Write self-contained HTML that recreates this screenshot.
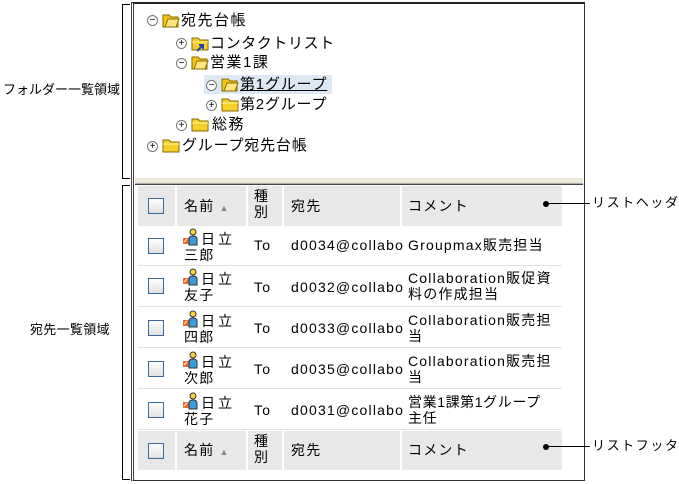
<!DOCTYPE html><html><head><meta charset="utf-8"><style>
*{margin:0;padding:0;box-sizing:border-box}
body{width:679px;height:484px;background:#fff;position:relative;overflow:hidden;font-family:"Liberation Sans","Noto Sans CJK JP",sans-serif;font-size:14px;color:#000}
.a{position:absolute;white-space:nowrap}
.t{font-size:14px;line-height:16px;letter-spacing:1.2px}
.tr{font-size:15px;line-height:16px;letter-spacing:1.5px}
.fold{position:absolute;width:18px;height:15px}
.pm{position:absolute;width:11px;height:11px;border:1px solid #777;border-radius:50%;background:#fff;font-size:10px;line-height:9px;text-align:center;color:#000}
.cb{position:absolute;width:16px;height:16px;border:1.5px solid #3c6a9c;background:linear-gradient(#fff,#e0e0e0)}
.hd{position:absolute;background:#e8e8e8}
.sep{position:absolute;left:138px;width:424px;height:1px;background:#e2e2e2}
</style></head><body>
<div class="a" style="left:122px;top:4px;width:8px;height:175px;border:1px solid #000;border-right:none"></div>
<div class="a" style="left:122px;top:185px;width:8px;height:295px;border:1px solid #000;border-right:none"></div>
<div class="a t" style="left:3px;top:82px;font-size:13px;letter-spacing:0px">フォルダー一覧領域</div>
<div class="a t" style="left:30px;top:322px;font-size:13px;letter-spacing:0.3px">宛先一覧領域</div>
<div class="a" style="left:131px;top:2px;width:454px;height:479px;border:1px solid #333;border-left:3px double #444;border-top:2px solid #222"></div>
<div class="a" style="left:135px;top:177px;width:448px;height:7px;background:#ece9d8;border-top:1px solid #fff;border-bottom:1px solid #aaa"></div>
<div class="a" style="left:135px;top:184px;width:448px;height:1px;background:#444"></div>
<svg width="0" height="0" style="position:absolute"><defs>
<symbol id="fo" viewBox="0 0 18 15"><path d="M1 2h6l2 2h7v10H1z" fill="#f5c518" stroke="#8a6a00"/><path d="M3 14l3-8h11l-3 8z" fill="#ffe680" stroke="#8a6a00"/></symbol>
<symbol id="fc" viewBox="0 0 18 15"><path d="M1 2h6l2 2h8v10H1z" fill="#f7cf2b" stroke="#8a6a00"/><path d="M1 6h16" stroke="#fff3a0"/></symbol>
<symbol id="pe" viewBox="0 0 16 18"><rect x="0" y="10" width="6" height="6" fill="#f06a2a"/><path d="M1 14l3-3" stroke="#fff"/><circle cx="10" cy="4" r="3" fill="#ffd23a" stroke="#333"/><path d="M6 17v-6q0-3 4-3t4 3v6z" fill="#3a9be0" stroke="#333"/></symbol>
</defs></svg>
<div class="pm" style="left:147px;top:15px">−</div><svg class="fold" style="left:162px;top:13px"><use href="#fo"/></svg><div class="a tr" style="left:181px;top:13px">宛先台帳</div>
<div class="pm" style="left:176px;top:38px">+</div><svg class="fold" style="left:191px;top:36px"><use href="#fc"/></svg><svg class="a" width="10" height="10" style="left:196px;top:42px"><path d="M1 9l6-6M3 3h4v4" stroke="#1d48b0" stroke-width="2" fill="none"/></svg><div class="a tr" style="left:210px;top:36px;letter-spacing:0.6px">コンタクトリスト</div>
<div class="pm" style="left:176px;top:58px">−</div><svg class="fold" style="left:191px;top:55px"><use href="#fo"/></svg><div class="a tr" style="left:210px;top:55px">営業1課</div>
<div class="a" style="left:204px;top:75px;width:128px;height:19px;background:#dde8f4"></div>
<div class="pm" style="left:206px;top:80px">−</div><svg class="fold" style="left:221px;top:77px"><use href="#fo"/></svg><div class="a tr" style="left:240px;top:77px;text-decoration:underline;letter-spacing:0.8px">第1グループ</div>
<div class="pm" style="left:206px;top:100px">+</div><svg class="fold" style="left:221px;top:97px"><use href="#fc"/></svg><div class="a tr" style="left:240px;top:97px;letter-spacing:0.8px">第2グループ</div>
<div class="pm" style="left:176px;top:120px">+</div><svg class="fold" style="left:191px;top:117px"><use href="#fc"/></svg><div class="a tr" style="left:212px;top:117px">総務</div>
<div class="pm" style="left:147px;top:141px">+</div><svg class="fold" style="left:162px;top:138px"><use href="#fc"/></svg><div class="a tr" style="left:182px;top:138px;letter-spacing:0.8px">グループ宛先台帳</div>
<div class="hd" style="left:138px;top:186px;width:37px;height:40px"></div>
<div class="hd" style="left:177px;top:186px;width:69px;height:40px"></div>
<div class="hd" style="left:248px;top:186px;width:34px;height:40px"></div>
<div class="hd" style="left:284px;top:186px;width:116px;height:40px"></div>
<div class="hd" style="left:402px;top:186px;width:160px;height:40px"></div>
<div class="cb" style="left:148px;top:198px"></div>
<div class="a t" style="left:184px;top:198px">名前 <span style="color:#888;font-size:9px">▲</span></div>
<div class="a t" style="left:254px;top:188px">種<br>別</div>
<div class="a t" style="left:291px;top:198px">宛先</div>
<div class="a t" style="left:408px;top:198px">コメント</div>
<div class="sep" style="top:265px"></div><div class="sep" style="top:306px"></div><div class="sep" style="top:347px"></div><div class="sep" style="top:388px"></div><div class="sep" style="top:429px"></div>
<div class="cb" style="left:148px;top:238px"></div><svg class="a" width="16" height="18" style="left:183px;top:228px"><use href="#pe"/></svg><div class="a t" style="left:201px;top:231px;letter-spacing:3px">日立</div><div class="a t" style="left:184px;top:247px">三郎</div><div class="a t" style="left:254px;top:237px">To</div><div class="a t" style="left:291px;top:237px">d0034@collabo</div><div class="a t" style="left:408px;top:237px">Groupmax販売担当</div>
<div class="cb" style="left:148px;top:278px"></div><svg class="a" width="16" height="18" style="left:183px;top:268px"><use href="#pe"/></svg><div class="a t" style="left:201px;top:271px;letter-spacing:3px">日立</div><div class="a t" style="left:184px;top:287px">友子</div><div class="a t" style="left:254px;top:279px">To</div><div class="a t" style="left:291px;top:279px">d0032@collabo</div><div class="a t" style="left:408px;top:270px">Collaboration販促資<br>料の作成担当</div>
<div class="cb" style="left:148px;top:320px"></div><svg class="a" width="16" height="18" style="left:183px;top:310px"><use href="#pe"/></svg><div class="a t" style="left:201px;top:313px;letter-spacing:3px">日立</div><div class="a t" style="left:184px;top:329px">四郎</div><div class="a t" style="left:254px;top:320px">To</div><div class="a t" style="left:291px;top:320px">d0033@collabo</div><div class="a t" style="left:408px;top:312px">Collaboration販売担<br>当</div>
<div class="cb" style="left:148px;top:361px"></div><svg class="a" width="16" height="18" style="left:183px;top:351px"><use href="#pe"/></svg><div class="a t" style="left:201px;top:354px;letter-spacing:3px">日立</div><div class="a t" style="left:184px;top:370px">次郎</div><div class="a t" style="left:254px;top:361px">To</div><div class="a t" style="left:291px;top:361px">d0035@collabo</div><div class="a t" style="left:408px;top:353px">Collaboration販売担<br>当</div>
<div class="cb" style="left:148px;top:402px"></div><svg class="a" width="16" height="18" style="left:183px;top:392px"><use href="#pe"/></svg><div class="a t" style="left:201px;top:395px;letter-spacing:3px">日立</div><div class="a t" style="left:184px;top:411px">花子</div><div class="a t" style="left:254px;top:402px">To</div><div class="a t" style="left:291px;top:402px">d0031@collabo</div><div class="a t" style="left:408px;top:394px;letter-spacing:0.6px">営業1課第1グループ<br>主任</div>
<div class="hd" style="left:138px;top:431px;width:37px;height:39px"></div>
<div class="hd" style="left:177px;top:431px;width:69px;height:39px"></div>
<div class="hd" style="left:248px;top:431px;width:34px;height:39px"></div>
<div class="hd" style="left:284px;top:431px;width:116px;height:39px"></div>
<div class="hd" style="left:402px;top:431px;width:160px;height:39px"></div>
<div class="cb" style="left:148px;top:443px"></div>
<div class="a t" style="left:184px;top:442px">名前 <span style="color:#888;font-size:9px">▲</span></div>
<div class="a t" style="left:254px;top:433px">種<br>別</div>
<div class="a t" style="left:291px;top:442px">宛先</div>
<div class="a t" style="left:408px;top:442px">コメント</div>
<div class="a" style="left:543px;top:201px;width:6px;height:6px;border-radius:50%;background:#000"></div>
<div class="a" style="left:546px;top:203px;width:44px;height:1px;background:#000"></div>
<div class="a t" style="left:592px;top:195px;font-size:13px;letter-spacing:1.6px">リストヘッダ</div>
<div class="a" style="left:543px;top:444px;width:6px;height:6px;border-radius:50%;background:#000"></div>
<div class="a" style="left:546px;top:446px;width:44px;height:1px;background:#000"></div>
<div class="a t" style="left:592px;top:438px;font-size:13px;letter-spacing:1.6px">リストフッタ</div>
</body></html>
